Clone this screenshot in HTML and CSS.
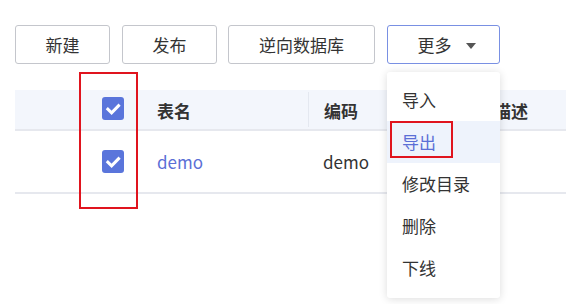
FILE: index.html
```html
<!DOCTYPE html>
<html lang="zh-CN">
<head>
  <meta charset="UTF-8">
  <meta name="viewport" content="width=device-width, initial-scale=1.0">
  <title>表管理</title>
  <link rel="stylesheet" href="styles.css">
</head>
<body>
<div class="page">

  <!-- 工具栏 -->
  <div class="toolbar">
    <button class="btn btn-new">新建</button>
    <button class="btn btn-publish">发布</button>
    <button class="btn btn-reverse">逆向数据库</button>
    <button class="btn btn-more">更多 <span class="caret"></span></button>
  </div>

  <!-- 表格 -->
  <div class="table">
    <div class="row head">
      <div class="cell check">
        <svg class="checkbox" viewBox="0 0 22 23"><rect width="22" height="23" rx="3"/><polyline points="4.8,11.2 9.6,15.8 17.6,7.6"/></svg>
      </div>
      <div class="cell">表名</div>
      <div class="cell divider">编码</div>
      <div class="cell divider">描述</div>
    </div>
    <div class="row">
      <div class="cell check">
        <svg class="checkbox" viewBox="0 0 22 23"><rect width="22" height="23" rx="3"/><polyline points="4.8,11.2 9.6,15.8 17.6,7.6"/></svg>
      </div>
      <div class="cell"><a href="#" class="link">demo</a></div>
      <div class="cell">demo</div>
      <div class="cell"></div>
    </div>
  </div>

  <div class="mark mark-checks"></div>

  <!-- 更多 下拉菜单 -->
  <ul class="dropdown">
    <li>导入</li>
    <li class="active">导出</li>
    <li>修改目录</li>
    <li>删除</li>
    <li>下线</li>
  </ul>
  <div class="mark mark-export"></div>

</div>
</body>
</html>
```

FILE: styles.css
```css
* {
  margin: 0;
  padding: 0;
  box-sizing: border-box;
}

body {
  font-family: "Noto Sans CJK SC", "Noto Sans", sans-serif;
  background-color: #fff;
  color: #333;
  font-size: 17px;
}

.page {
  position: relative;
  width: 576px;
  height: 304px;
  padding: 25px 10px 0 15px;
}

.toolbar {
  display: flex;
  gap: 12px;
}

.btn {
  height: 39px;
  background-color: #fff;
  border: 1.5px solid #c4c6cc;
  border-radius: 3px;
  font-family: inherit;
  font-size: 17px;
  color: #333;
  display: flex;
  align-items: center;
  justify-content: center;
}

.btn-new { width: 95px; }
.btn-publish { width: 95px; }
.btn-reverse { width: 147px; margin-left: -1px; }
.btn-more {
  width: 113px;
  border-color: #7990e3;
  gap: 14px;
  padding-left: 6px;
}

.caret {
  width: 0;
  height: 0;
  border-left: 5.5px solid transparent;
  border-right: 5.5px solid transparent;
  border-top: 6px solid #555;
  margin-top: 2px;
}

.table {
  margin-top: 26px;
  width: 551px;
}

.row {
  display: grid;
  grid-template-columns: 127px 166px 170px 88px;
  height: 63px;
  border-bottom: 2px solid #e6e8ee;
}

.row.head {
  height: 41px;
  background-color: #f3f6fc;
  font-weight: bold;
}

.cell {
  display: flex;
  align-items: center;
  padding-left: 15px;
}

.row.head .cell {
  padding-top: 2px;
}

.cell.divider {
  border-left: 1px solid #e4e8f0;
  margin: 2px 0;
}

.cell.check {
  padding-left: 87px;
  padding-top: 0;
}

.row.head .cell.check {
  padding-top: 0;
  padding-bottom: 2px;
}

.row .cell.check {
  padding-bottom: 1px;
}

.checkbox {
  width: 22px;
  height: 23px;
}

.checkbox rect {
  fill: #5a75db;
}

.checkbox polyline {
  fill: none;
  stroke: #fff;
  stroke-width: 3;
}

.link {
  color: #5b6fd6;
  text-decoration: none;
}

.mark {
  position: absolute;
  border: 2px solid #e0141e;
}

.mark-checks {
  left: 79px;
  top: 72px;
  width: 59px;
  height: 137px;
}

.dropdown {
  position: absolute;
  left: 387px;
  top: 72px;
  width: 113px;
  height: 226px;
  list-style: none;
  background-color: #fff;
  border-radius: 3px;
  box-shadow: 0 1px 8px rgba(0, 0, 0, 0.14);
  padding-top: 7px;
}

.dropdown li {
  height: 42px;
  line-height: 42px;
  padding-left: 15px;
}

.dropdown li.active {
  background-color: #eef3fc;
  color: #5b6fd6;
}

.mark-export {
  left: 390px;
  top: 121px;
  width: 63px;
  height: 37px;
}
```
